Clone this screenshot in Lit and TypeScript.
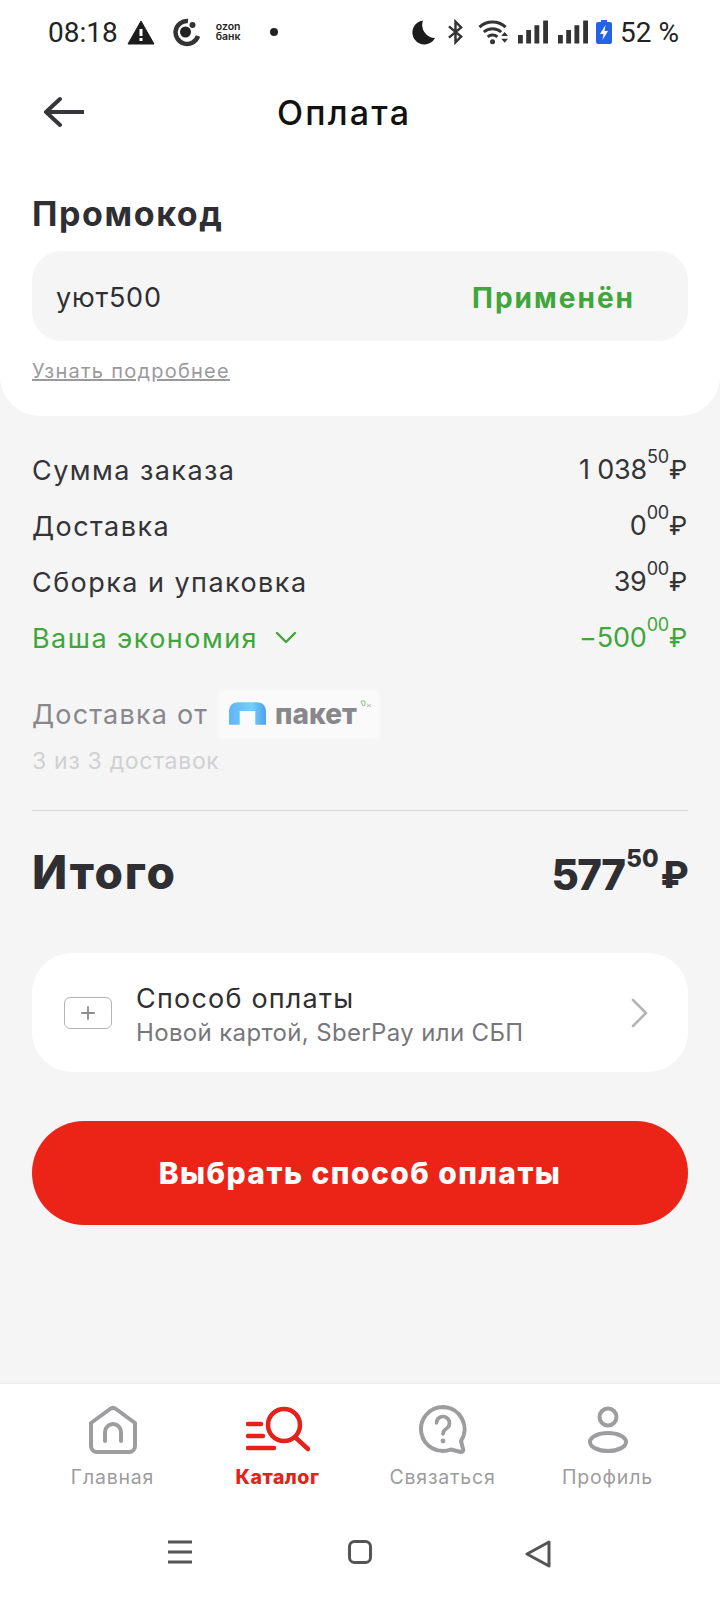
import { LitElement, html, css } from "lit";
import { customElement } from "lit/decorators.js";

const price = (main: string, cents: string) => html`<span class="price">${main}<sup>${cents}</sup><span class="rub">₽</span></span>`;

@customElement("app-root")
export class AppRoot extends LitElement {
  static styles = css`
    :host { display: block; width: 720px; height: 1600px; background: #f5f5f5; font-family: Inter, "Open Sans", sans-serif; color: #2e2e33; overflow: hidden; }
    * { box-sizing: border-box; }
    .page { height: 1600px; display: flex; flex-direction: column; }
    .panel { background: #fff; height: 416px; border-radius: 0 0 40px 40px; display: flex; flex-direction: column; flex: none; }
    .status { height: 64px; padding: 0 41px 0 48px; display: flex; align-items: center; font-family: Roboto, sans-serif; font-size: 28px; color: #222; }
    .status .left { display: flex; align-items: center; }
    .status .right { margin-left: auto; display: flex; align-items: center; }
    .status svg { display: block; flex: none; }
    .ozon { font: 600 10.5px/10px Inter, sans-serif; margin-left: 15px; color: #222; width: 30px; }
    .head { height: 96px; padding: 0 0 0 44px; display: flex; align-items: center; position: relative; }
    .head h1 { margin: 0 0 0 193px; font-size: 34px; font-weight: 500; color: #111; letter-spacing: 2.2px; }
    .promo { padding: 0 32px; }
    .promo h2 { margin: 34px 0 0; font-size: 34px; line-height: 40px; font-weight: 700; letter-spacing: 1.6px; }
    .input { margin-top: 17px; height: 90px; border-radius: 30px; background: #f5f5f5; display: flex; align-items: center; padding: 3px 53px 0 24px; justify-content: space-between; font-size: 27px; letter-spacing: .8px; }
    .input b { color: #3ea63a; font-weight: 700; font-size: 28px; letter-spacing: 2px; }
    .more { display: inline-block; margin-top: 19px; color: #9a9a9e; font-size: 20px; line-height: 22px; text-decoration: underline; letter-spacing: 1.25px; }
    .body { padding: 0 32px; flex: 1; display: flex; flex-direction: column; }
    .rows { display: flex; flex-direction: column; margin-top: 26px; }
    .row { height: 56px; display: flex; align-items: center; justify-content: space-between; font-size: 27px; letter-spacing: 1.45px; color: #333338; }
    .green { color: #3ea63a; }
    .save { display: flex; align-items: center; gap: 17px; }
    .price { font-size: 27px; letter-spacing: -.2px; display: inline-flex; align-items: flex-start; line-height: 32px; }
    sup { font-size: 18px; line-height: 18px; margin-top: -6px; vertical-align: baseline; }
    .rub { font-size: 26px; margin-right: 1px; }
    .from { display: flex; align-items: center; margin-top: 23px; height: 50px; color: #88888c; font-size: 27px; letter-spacing: 1.2px; }
    .badge { margin-left: 11px; height: 47px; padding: 0 4px 0 10px; background: #fafafa; box-shadow: 0 0 5px #fafafa; display: flex; align-items: center; gap: 9px; font-weight: 800; font-size: 28px; letter-spacing: 0; color: #88888c; border-radius: 4px; position: relative; width: 160px; }
    .xs { position: absolute; left: 141px; top: 9px; display: block; }
    .count { margin-top: 2px; color: #d0d0d2; font-size: 23px; letter-spacing: .7px; line-height: 40px; }
    hr { margin: 29px 0 0; border: 0; height: 1px; background: #d4d4d6; flex: none; }
    .total { display: flex; justify-content: space-between; align-items: center; height: 62px; margin-top: 30px; }
    .total .t { font-size: 46px; font-weight: 800; letter-spacing: 1.8px; }
    .total .price { font-size: 42px; font-weight: 800; line-height: 56px; letter-spacing: -1.6px; padding-top: 5px; }
    .total sup { font-size: 24px; line-height: 27px; margin: -2px 0 0 2px; letter-spacing: 0; }
    .total .rub { font-size: 37px; margin-left: 2px; margin-right: 1px; }
    .pay { margin-top: 50px; height: 119px; background: #fff; border-radius: 40px; display: flex; align-items: center; padding: 0 40px 0 32px; flex: none; }
    .plus { width: 48px; height: 32px; border: 1px solid #b5b5b8; border-radius: 6px; display: flex; align-items: center; justify-content: center; flex: none; }
    .ptext { margin-left: 24px; padding-top: 6px; display: flex; flex-direction: column; flex: 1; }
    .ptext .a { font-size: 27px; line-height: 34px; letter-spacing: 1.2px; color: #2e2e33; }
    .ptext .b { font-size: 24px; line-height: 34px; letter-spacing: .35px; color: #77777b; }
    .btn { margin-top: 49px; height: 104px; border-radius: 52px; background: #ec2317; color: #fff; font-size: 30px; font-weight: 800; display: flex; align-items: center; justify-content: center; letter-spacing: 1.45px; flex: none; }
    .nav { position: absolute; top: 1383px; left: 0; width: 720px; height: 217px; background: #fff; border-top: 1px solid #ececec; }
    .tabs { display: grid; grid-template-columns: 165px 165px 165px 165px; padding-left: 30px; padding-top: 21px; }
    .tab { display: flex; flex-direction: column; align-items: center; gap: 9px; font-size: 19.5px; letter-spacing: .8px; color: #9c9c9e; line-height: 26px; }
    .tab svg { display: block; }
    .tab.on { color: #e4211b; font-weight: 800; letter-spacing: .5px; }
    .sys { position: absolute; left: 0; right: 0; top: 156px; height: 36px; }
    .sys svg { position: absolute; top: 0; }
  `;

  render() {
    return html`<div class="page">
      <div class="panel">
        <div class="status">
          <div class="left">
            <span>08:18</span>
            <svg style="margin-left:9px" width="28" height="26" viewBox="0 0 28 26"><path d="M14 2 1 25h26z" fill="#1c1c1c" stroke="#1c1c1c" stroke-width="1" stroke-linejoin="round"/><rect x="12.5" y="10" width="3" height="7" fill="#fff"/><rect x="12.5" y="19" width="3" height="3" fill="#fff"/></svg>
            <svg style="margin-left:16px" width="30" height="30" viewBox="0 0 30 30"><path d="M17 4A11.5 11.5 0 1 0 27 19" fill="none" stroke="#333" stroke-width="4.5"/><circle cx="14.5" cy="15" r="5.5" fill="#222"/><circle cx="21.5" cy="8" r="3" fill="#333"/></svg>
            <div class="ozon">ozon<br>банк</div>
            <svg style="margin-left:23px" width="10" height="10"><circle cx="5" cy="5" r="4" fill="#222"/></svg>
          </div>
          <div class="right">
            <svg width="24" height="26" viewBox="0 0 24 26"><path d="M11 1.500a12 12 0 1 0 12 17.500A13 13 0 0 1 11 1.500z" fill="#1c1c1c"/></svg>
            <svg style="margin-left:12px" width="15" height="26" viewBox="0 0 16 26"><path d="M1 7l13 11-6 6V2l6 6L1 19" fill="none" stroke="#333" stroke-width="2.6"/></svg>
            <svg style="margin-left:15px" width="31" height="26" viewBox="0 0 32 26"><path d="M1.5 8a20 20 0 0 1 27 0M6 13a14 14 0 0 1 18 0M10 18a7.5 7.5 0 0 1 10 0" fill="none" stroke="#333" stroke-width="3"/><circle cx="15" cy="23" r="2.6" fill="#333"/><path d="M24 17h7l-3.500-4zM24 20h7l-3.500 4z" fill="#333"/></svg>
            <svg style="margin-left:9px" width="30" height="24" viewBox="0 0 31 24"><path d="M0 15h5v9H0zM8.500 10h5v14h-5zM17 5h5v19h-5zM26 0h5v24h-5z" fill="#333"/></svg>
            <svg style="margin-left:10px" width="30" height="24" viewBox="0 0 31 24"><path d="M0 15h5v9H0zM8.500 10h5v14h-5zM17 5h5v19h-5zM26 0h5v24h-5z" fill="#333"/></svg>
            <svg style="margin-left:8px" width="16" height="24" viewBox="0 0 16 24"><path d="M5 0h6v2h3a2 2 0 0 1 2 2v18a2 2 0 0 1-2 2H2a2 2 0 0 1-2-2V4a2 2 0 0 1 2-2h3z" fill="#2463e8"/><path d="M9.500 5 4 14h3.500l-1 6L12 11H8.500z" fill="#fff"/></svg>
            <span style="margin-left:8px">52 %</span>
          </div>
        </div>
        <div class="head">
          <svg width="40" height="32" viewBox="0 0 40 32"><path d="M16 3 2 16l14 13M2 16h37" fill="none" stroke="#36363a" stroke-width="4" stroke-linecap="round" stroke-linejoin="round"/></svg>
          <h1>Оплата</h1>
        </div>
        <div class="promo">
          <h2>Промокод</h2>
          <div class="input"><span>уют500</span><b>Применён</b></div>
          <span class="more">Узнать подробнее</span>
        </div>
      </div>
      <div class="body">
        <div class="rows">
          <div class="row"><span>Сумма заказа</span>${price("1 038", "50")}</div>
          <div class="row"><span>Доставка</span>${price("0", "00")}</div>
          <div class="row"><span>Сборка и упаковка</span>${price("39", "00")}</div>
          <div class="row green"><span class="save">Ваша экономия
            <svg width="22" height="14" viewBox="0 0 22 14"><path d="M2 2l9 9 9-9" fill="none" stroke="#3ea63a" stroke-width="2.400" stroke-linecap="round" stroke-linejoin="round"/></svg></span>${price("−500", "00")}</div>
        </div>
        <div class="from">Доставка от
          <div class="badge">
            <svg width="37" height="24" viewBox="0 0 38 24"><defs><linearGradient id="g" x1="0" x2="1" y1="0" y2="0"><stop offset="0" stop-color="#62b4f6"/><stop offset=".6" stop-color="#70d0fb"/><stop offset="1" stop-color="#4fa0ee"/></linearGradient></defs><path d="M0 23V10C0 3 4 0 10 0h18c6 0 10 3 10 10v13h-11V9H11v14z" fill="url(#g)"/></svg>
            <span>пакет</span>
            <svg class="xs" width="12" height="8" viewBox="0 0 12 8"><path d="M1 1h4v3a2 2 0 0 1-2 2z" fill="none" stroke="#8fc08a" stroke-width="1"/><path d="M7 4l4 3M11 4 7 7" stroke="#aaa" stroke-width=".8"/></svg>
          </div>
        </div>
        <div class="count">3 из 3 доставок</div>
        <hr />
        <div class="total"><span class="t">Итого</span>${price("577", "50")}</div>
        <div class="pay">
          <div class="plus"><svg width="14" height="14" viewBox="0 0 14 14"><path d="M7 1v12M1 7h12" stroke="#8b8b8e" stroke-width="1.800" stroke-linecap="round"/></svg></div>
          <div class="ptext"><span class="a">Способ оплаты</span><span class="b">Новой картой, SberPay или СБП</span></div>
          <svg width="18" height="30" viewBox="0 0 18 30"><path d="M3 2l13 13L3 28" fill="none" stroke="#b4b4b6" stroke-width="2.600" stroke-linecap="round" stroke-linejoin="round"/></svg>
        </div>
        <div class="btn">Выбрать способ оплаты</div>
      </div>
      <div class="nav">
        <div class="tabs">
          <div class="tab"><svg width="50" height="50" viewBox="0 0 50 50"><path d="M3 18 22 4a5 5 0 0 1 6 0l19 14v23a6 6 0 0 1-6 6H9a6 6 0 0 1-6-6z" fill="none" stroke="#9d9d9f" stroke-width="4" stroke-linejoin="round"/><path d="M17 36V27a8 8 0 0 1 16 0v9" fill="none" stroke="#9d9d9f" stroke-width="4" stroke-linecap="round"/></svg>Главная</div>
          <div class="tab on"><svg width="64" height="50" viewBox="0 0 64 50"><circle cx="38" cy="20" r="16" fill="none" stroke="#e4211b" stroke-width="4.500"/><path d="M50 33l12 11M2 19h13M2 31h15M2 43h26" stroke="#e4211b" stroke-width="4.500" stroke-linecap="round" fill="none"/></svg>Каталог</div>
          <div class="tab"><svg width="50" height="50" viewBox="0 0 50 50"><path d="M25 2a22 22 0 1 0 8 42.500l10 2.500a2 2 0 0 0 2-3l-2-8A22 22 0 0 0 25 2z" fill="none" stroke="#9d9d9f" stroke-width="4" stroke-linejoin="round"/><path d="M18.500 18a6.500 6.500 0 1 1 10 5.500c-2.500 1.500-3.500 3-3.500 5.500" fill="none" stroke="#9d9d9f" stroke-width="3.600" stroke-linecap="round"/><circle cx="25" cy="36" r="2.400" fill="#9d9d9f"/></svg>Связаться</div>
          <div class="tab"><svg width="44" height="50" viewBox="0 0 44 50"><circle cx="22" cy="12" r="8.500" fill="none" stroke="#9d9d9f" stroke-width="4"/><ellipse cx="22" cy="37" rx="18" ry="9" fill="none" stroke="#9d9d9f" stroke-width="4"/></svg>Профиль</div>
        </div>
        <div class="sys">
          <svg style="left:167px" width="26" height="24" viewBox="0 0 26 24"><path d="M1 2h24M1 12h24M1 22h24" stroke="#555" stroke-width="3"/></svg>
          <svg style="left:348px" width="24" height="24" viewBox="0 0 24 24"><rect x="1.500" y="1.500" width="21" height="21" rx="5" fill="none" stroke="#555" stroke-width="3"/></svg>
          <svg style="left:525px" width="26" height="28" viewBox="0 0 26 28"><path d="M24 2 2 14l22 12z" fill="none" stroke="#555" stroke-width="3" stroke-linejoin="round"/></svg>
        </div>
      </div>
    </div>`;
  }
}
